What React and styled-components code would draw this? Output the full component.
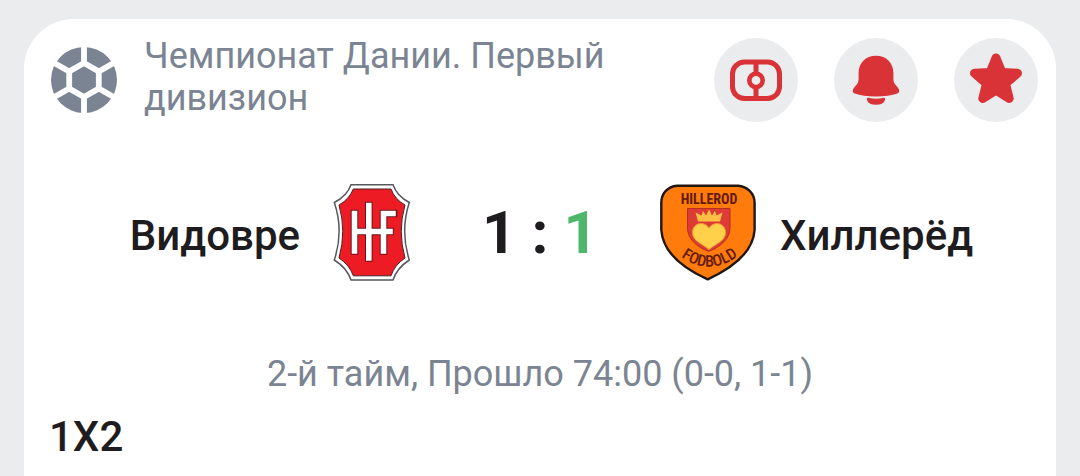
import React from 'react'
import styled, { createGlobalStyle, ThemeProvider } from 'styled-components'

const theme = {
  colors: {
    page: '#ebecee',
    card: '#ffffff',
    muted: '#7b8492',
    text: '#1f1c20',
    red: '#d93237',
    green: '#4fb76c'
  }
}

const GlobalStyle = createGlobalStyle`
  body {
    margin: 0;
    background: ${props => props.theme.colors.page};
    font-family: Roboto, 'Liberation Sans', sans-serif;
    overflow: hidden;
  }
`

const Page = styled.main`
  padding: 19px 24px 0;
`

const Card = styled.article`
  background: ${props => props.theme.colors.card};
  border-radius: 50px 50px 0 0;
  padding-bottom: 24px;
`

const Header = styled.header`
  display: flex;
  align-items: flex-start;
  padding: 15px 18px 0 27px;
`

const BallIcon = styled.svg`
  flex: none;
  width: 66px;
  height: 66px;
  margin: 13px 27px 0 0;
`

const League = styled.h1`
  flex: 1;
  max-width: 500px;
  margin: 0;
  padding-top: 1px;
  color: ${props => props.theme.colors.muted};
  font-size: 36px;
  font-weight: 400;
  line-height: 42px;
`

const Actions = styled.div`
  display: flex;
  gap: 36px;
  margin: 4px 0 0 auto;
`

const RoundButton = styled.button`
  width: 84px;
  height: 84px;
  padding: 0;
  border: 0;
  border-radius: 50%;
  background: ${props => props.theme.colors.page};
  color: ${props => props.theme.colors.red};
  cursor: pointer;

  svg {
    display: block;
  }
`

const Match = styled.section`
  display: grid;
  grid-template-columns: 1fr 96px 240px 96px 1fr;
  align-items: center;
  padding-top: 62px;
`

const Team = styled.h2`
  margin: 0;
  padding: 6px 24px 0;
  text-align: ${props => props.$align};
  color: ${props => props.theme.colors.text};
  font-size: 42px;
  font-weight: 500;
  line-height: 50px;
`

const Crest = styled.svg`
  display: block;
  width: 96px;
  height: 97px;
`

const Score = styled.p`
  display: flex;
  justify-content: center;
  gap: 15px;
  margin: 0;
  color: ${props => props.theme.colors.text};
  font-size: 60px;
  font-weight: 700;
  line-height: 72px;
`

const Goals = styled.span`
  color: ${props => props.$live ? props.theme.colors.green : 'inherit'};
`

const Status = styled.p`
  margin: 0;
  padding-top: 71px;
  text-align: center;
  color: ${props => props.theme.colors.muted};
  font-size: 36px;
  line-height: 44px;
`

const Market = styled.h3`
  margin: 0;
  padding: 16px 25px 0;
  color: ${props => props.theme.colors.text};
  font-size: 42px;
  font-weight: 500;
  line-height: 50px;
`

const Ball = () =>
  <BallIcon viewBox='0 0 66 66' aria-hidden='true'>
    <circle cx='33' cy='33' r='33' fill='#7b8492' />
    <path
      d='M33 16 47.8 24.5V41.5L33 50 18.2 41.5V24.5ZM33 16V-1M47.8 24.5 64 15.2M47.8 41.5 64 50.8M33 50V67M18.2 41.5 2 50.8M18.2 24.5 2 15.2'
      fill='none'
      stroke='#fff'
      strokeWidth='5.8'
    />
  </BallIcon>

const FieldIcon = () =>
  <svg width='84' height='84' viewBox='0 0 84 84' fill='none' stroke='currentColor' strokeWidth='5' aria-hidden='true'>
    <rect x='18.5' y='24' width='47' height='36.5' rx='12' />
    <circle cx='42' cy='42.3' r='6.7' strokeWidth='4.6' />
    <path d='M42 24V35M42 49.5V60' />
  </svg>

const BellIcon = () =>
  <svg width='84' height='84' viewBox='0 0 84 84' fill='currentColor' aria-hidden='true'>
    <path d='M42 17.7C31.5 17.7 24.6 25 24.6 35V41.5C24.6 45 22.2 47 20 49.7C18.2 52 18.4 54.7 20.8 55.5C26 57.4 33.5 58.4 42 58.4S58 57.4 63.2 55.5C65.6 54.7 65.8 52 64 49.7C61.8 47 59.4 45 59.4 41.5V35C59.4 25 52.5 17.7 42 17.7Z' />
    <path d='M34.5 59.8C39.5 61.1 44.5 61.1 49.5 59.8C51.2 59.5 51.5 61.4 50.6 62.9C49.2 65.7 46.3 66.7 42 66.7S34.8 65.7 33.4 62.9C32.5 61.4 32.8 59.5 34.5 59.8Z' />
  </svg>

const StarIcon = () =>
  <svg width='84' height='84' viewBox='0 0 84 84' fill='currentColor' aria-hidden='true'>
    <path
      d='M42 20 47.8 34.4 63.5 35.2 51.5 45.5 55.2 60.5 42 52.3 28.8 60.5 32.5 45.5 20.5 35.2 36.2 34.4Z'
      stroke='currentColor'
      strokeWidth='9'
      strokeLinejoin='round'
    />
  </svg>

const HvidovreCrest = () =>
  <Crest viewBox='0 0 96 97' role='img' aria-label='Видовре'>
    <path
      d='M27 .7H69Q73 12 85.3 18.5Q76 47 85.3 76Q73 84 69 96H27Q23 84 10.3 76Q20 47 10.3 18.5Q23 12 27 .7Z'
      fill='#fff'
      stroke='#55585c'
      strokeWidth='1.5'
    />
    <path
      d='M29.3 5H67Q70.5 15 81 21Q73.5 47 81 74Q70.5 81 67 91.8H29.3Q25.5 81 15 74Q22.5 47 15 21Q25.5 15 29.3 5Z'
      fill='#ed1c24'
      stroke='#4a2026'
      strokeWidth='1'
    />
    <g fill='none' stroke='#6b1219' strokeWidth='7.6' strokeLinecap='square'>
      <path d='M30.5 29.5V67M44.8 21.5V74M59.5 29.5V67M30.5 47.5H66M59.5 29.5H69.5' />
    </g>
    <g fill='none' stroke='#fff' strokeWidth='5.6' strokeLinecap='square'>
      <path d='M30.5 29.5V67M44.8 21.5V74M59.5 29.5V67M30.5 47.5H66M59.5 29.5H69' />
    </g>
  </Crest>

const CrestText = styled.text`
  fill: #651a0c;
  font-family: 'Liberation Sans Narrow', 'Roboto Condensed', Roboto, sans-serif;
  font-weight: ${props => props.$weight};
  font-size: ${props => props.$size}px;
`

const HillerodCrest = () =>
  <Crest viewBox='0 0 96 97' role='img' aria-label='Хиллерёд'>
    <path
      d='M17 1.7H78C87 2.5 94.6 9 94.6 19V46C93 70 68 86 47.7 95.3C27 86 3 70 1.3 46V19C1.3 9 8 2.5 17 1.7Z'
      fill='#ff7b0b'
      stroke='#221610'
      strokeWidth='2.4'
      strokeLinejoin='round'
    />
    <CrestText x='49' y='20' textAnchor='middle' $size={14} $weight={700}>HILLEROD</CrestText>
    <path d='M27.5 24.5H70V44C70 55 60 63 48.7 67.5C37 63 27.5 55 27.5 44Z' fill='#dd3b35' stroke='#b5301d' strokeWidth='1' />
    <path d='M38 37.5 35.5 28.5 41.5 31.5 43 27 46 31.5 49 25.5 52 31.5 55 27 56.5 31.5 62.5 28.5 60 37.5Z' fill='#ffbf45' />
    <path d='M49 44C44 36.5 32.5 39 32.5 48.5C32.5 57 41 59 49 65.5C57 59 65.5 57 65.5 48.5C65.5 39 54 36.5 49 44Z' fill='#ffd04a' stroke='#f39a2f' strokeWidth='1' />
    <path id='crest-arc' d='M16 69Q49 97 83 68' fill='none' />
    <CrestText $size={16} $weight={500} textAnchor='middle'>
      <textPath href='#crest-arc' startOffset='50%'>FODBOLD</textPath>
    </CrestText>
  </Crest>

const App = () =>
  <ThemeProvider theme={theme}>
    <GlobalStyle />
    <Page>
      <Card>
        <Header>
          <Ball />
          <League>Чемпионат Дании. Первый дивизион</League>
          <Actions>
            <RoundButton type='button' aria-label='Трансляция'><FieldIcon /></RoundButton>
            <RoundButton type='button' aria-label='Уведомления'><BellIcon /></RoundButton>
            <RoundButton type='button' aria-label='Избранное'><StarIcon /></RoundButton>
          </Actions>
        </Header>
        <Match>
          <Team $align='right'>Видовре</Team>
          <HvidovreCrest />
          <Score>
            <Goals>1</Goals>
            <span>:</span>
            <Goals $live>1</Goals>
          </Score>
          <HillerodCrest />
          <Team $align='left'>Хиллерёд</Team>
        </Match>
        <Status>2-й тайм, Прошло 74:00 (0-0, 1-1)</Status>
        <Market>1X2</Market>
      </Card>
    </Page>
  </ThemeProvider>

export default App
